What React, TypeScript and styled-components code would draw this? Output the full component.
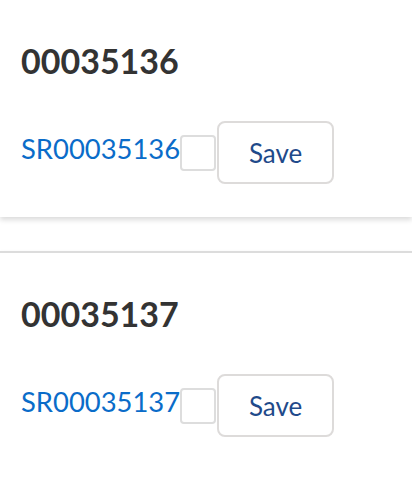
import React from "react";
import styled, { createGlobalStyle } from "styled-components";

const GlobalStyle = createGlobalStyle`
  html, body {
    margin: 0;
    padding: 0;
    background: #ffffff;
  }
  body {
    font-family: Lato, "Open Sans", Arial, sans-serif;
  }
`;

const List = styled.div`
  display: flex;
  flex-direction: column;
  gap: 34px;
`;

const Card = styled.section`
  background: #ffffff;
  padding: 41px 21px 33px;
  box-shadow: 0 3px 5px rgba(0, 0, 0, 0.14);
  & + & {
    border-top: 2px solid #dcdcdc;
  }
`;

const Title = styled.h2`
  margin: 0;
  font-size: 34px;
  line-height: 40px;
  font-weight: 700;
  color: #333333;
`;

const Row = styled.div`
  display: flex;
  align-items: center;
  margin-top: 40px;
`;

const RecordLink = styled.a`
  font-size: 27.4px;
  line-height: 34px;
  color: #0a6cc9;
  text-decoration: none;
  margin-bottom: 7px;
`;

const Check = styled.span`
  box-sizing: border-box;
  width: 36px;
  height: 36px;
  border: 2px solid #dddddd;
  border-radius: 4px;
  background: #ffffff;
  flex: none;
`;

const SaveButton = styled.button`
  box-sizing: border-box;
  width: 117px;
  height: 63px;
  margin-left: 1px;
  border: 2px solid #dddbda;
  border-radius: 8px;
  background: #ffffff;
  font-family: Lato, "Open Sans", Arial, sans-serif;
  font-size: 26px;
  color: #1f4a8a;
  padding: 0;
  cursor: pointer;
`;

const records = ["00035136", "00035137"];

export default function App() {
  return (
    <>
      <GlobalStyle />
      <List>
        {records.map((r) => (
          <Card key={r}>
            <Title>{r}</Title>
            <Row>
              <RecordLink href="#">SR{r}</RecordLink>
              <Check />
              <SaveButton>Save</SaveButton>
            </Row>
          </Card>
        ))}
      </List>
    </>
  );
}
